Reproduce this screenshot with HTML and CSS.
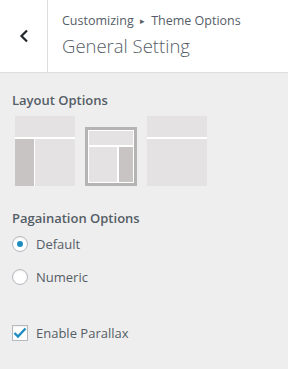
FILE: index.html
```html
<!DOCTYPE html>
<html lang="en">
<head>
    <meta charset="UTF-8">
    <title>General Setting</title>
    <link rel="stylesheet" href="styles.css">
</head>
<body>
    <div class="panel">
        <header class="panel-head">
            <button class="back" aria-label="Back">
                <svg width="10" height="14" viewBox="0 0 10 14"><path d="M8 1.5 L2.5 7 L8 12.5" fill="none" stroke="#23282d" stroke-width="2.2"/></svg>
            </button>
            <div class="title">
                <span class="crumb">Customizing <span class="sep">&#9656;</span> Theme Options</span>
                <h1>General Setting</h1>
            </div>
        </header>
        <div class="controls">
            <div class="control">
                <span class="label">Layout Options</span>
                <div class="layouts">
                    <div class="layout left">
                        <div class="top"></div>
                        <div class="body"><div class="side"></div><div class="main"></div></div>
                    </div>
                    <div class="layout right selected">
                        <div class="top"></div>
                        <div class="body"><div class="main"></div><div class="side"></div></div>
                    </div>
                    <div class="layout full">
                        <div class="top"></div>
                        <div class="body"><div class="main"></div></div>
                    </div>
                </div>
            </div>
            <div class="control">
                <span class="label">Pagaination Options</span>
                <label class="option"><span class="radio checked"></span>Default</label>
                <label class="option"><span class="radio"></span>Numeric</label>
            </div>
            <div class="control check-control">
                <label class="option">
                    <span class="checkbox">
                        <svg width="14" height="12" viewBox="0 0 14 12"><path d="M1.5 6 L5 9.5 L12.5 1.5" fill="none" stroke="#1e8cbe" stroke-width="2.4"/></svg>
                    </span>Enable Parallax</label>
            </div>
        </div>
    </div>
</body>
</html>
```

FILE: styles.css
```css
body {
    margin: 0;
    font-family: "Open Sans", "Noto Sans", sans-serif;
    background-color: #eeeeee;
    color: #555d66;
}
.panel {
    width: 288px;
    height: 369px;
    background-color: #eeeeee;
}
.panel-head {
    display: flex;
    height: 72px;
    background-color: #ffffff;
    border-bottom: 1px solid #dddddd;
}
.back {
    width: 48px;
    border: none;
    border-right: 1px solid #dddddd;
    background: #ffffff;
    padding: 0;
    display: flex;
    align-items: center;
    justify-content: center;
}
.title {
    padding: 11px 0 0 14px;
}
.crumb {
    display: block;
    font-size: 12.5px;
    color: #555d66;
    line-height: 20px;
}
.crumb .sep {
    font-size: 9px;
    padding: 0 3px;
    vertical-align: 1px;
}
.title h1 {
    margin: 0;
    font-size: 18.5px;
    font-weight: 300;
    color: #555d66;
    line-height: 30px;
}
.controls {
    padding: 17px 12px 0 12px;
}
.control {
    margin-bottom: 22px;
}
.label {
    display: block;
    font-size: 13px;
    font-weight: 600;
    line-height: 20px;
    margin-bottom: 6px;
}
.layouts {
    display: flex;
    align-items: flex-end;
    gap: 10px;
    padding-left: 3px;
}
.layout {
    width: 60px;
    height: 70px;
    display: flex;
    flex-direction: column;
    background: #ffffff;
    gap: 2px;
}
.layout .top {
    height: 21px;
    background: #e4e2e2;
}
.layout .body {
    flex: 1;
    display: flex;
    gap: 1px;
}
.layout .main {
    flex: 1;
    background: #e4e2e2;
}
.layout .side {
    width: 19px;
    background: #c9c4c4;
}
.layout.selected {
    box-sizing: border-box;
    width: 52px;
    height: 59px;
    border: 3px solid #b4b4b4;
    padding: 1px;
}
.layout.selected .top {
    height: 14px;
}
.layout.selected .side {
    width: 14px;
}
.layout.selected .body {
    gap: 2px;
}
.option {
    display: flex;
    align-items: center;
    font-size: 13px;
    height: 20px;
    margin-top: 13px;
}
.option:first-of-type {
    margin-top: 6px;
}
.radio, .checkbox {
    box-sizing: border-box;
    width: 16px;
    height: 16px;
    border: 1px solid #b4b9be;
    background: #ffffff;
    margin-right: 8px;
    display: flex;
    align-items: center;
    justify-content: center;
    box-shadow: inset 0 1px 2px rgba(0, 0, 0, 0.07);
}
.radio {
    border-radius: 50%;
}
.radio.checked::before {
    content: "";
    width: 6px;
    height: 6px;
    border-radius: 50%;
    background: #1e8cbe;
}
.check-control {
    padding-top: 8px;
}
```
